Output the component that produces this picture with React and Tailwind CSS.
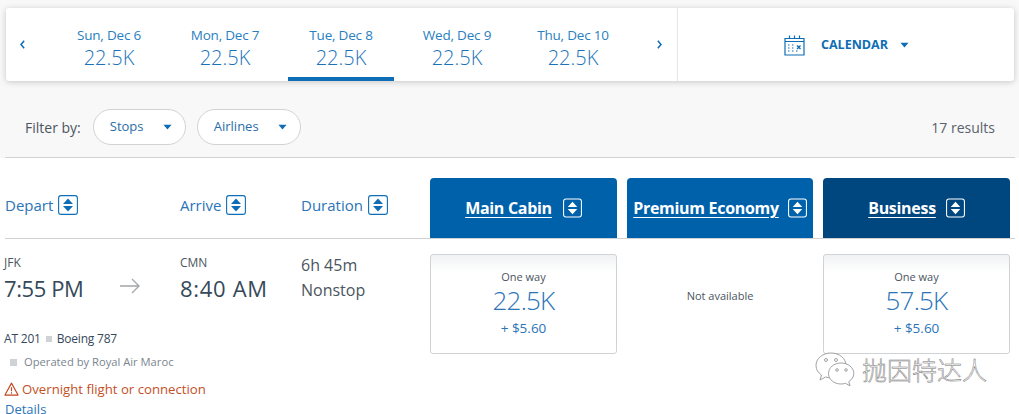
import React from 'react'

const dates = [
  { label: 'Sun, Dec 6', price: '22.5K' },
  { label: 'Mon, Dec 7', price: '22.5K' },
  { label: 'Tue, Dec 8', price: '22.5K', active: true },
  { label: 'Wed, Dec 9', price: '22.5K' },
  { label: 'Thu, Dec 10', price: '22.5K' },
]

const Caret = ({ className }) => (
  <svg viewBox="0 0 10 6" className={className} fill="currentColor">
    <path d="M0.5 0.5h9L5 5.8z" />
  </svg>
)

const Chevron = ({ left }) => (
  <svg viewBox="0 0 6 10" className="w-[5px] h-[9px] text-[#0e6db5]" fill="none" stroke="currentColor" strokeWidth="1.8">
    <path d={left ? 'M5 0.5L1.2 5 5 9.5' : 'M1 0.5L4.8 5 1 9.5'} />
  </svg>
)

const SortIcon = ({ light }) => (
  <svg viewBox="0 0 20 20" className={light ? 'w-[19px] h-[20px] text-white' : 'w-[20px] h-[20px] text-[#0e6db5]'}>
    <rect x="0.6" y="0.6" width="18.8" height="18.8" rx="2.5" fill="none" stroke="currentColor" strokeWidth="1.1" />
    <path d="M10 3.5L15 9H5z" fill="currentColor" />
    <path d="M10 16.5L15 11H5z" fill="currentColor" />
  </svg>
)

const CalendarIcon = () => (
  <svg viewBox="0 0 21 22" className="w-[21px] h-[22px] text-[#0e6db5]" fill="none" stroke="currentColor">
    <path d="M1 4.500h19v16.500H1zM1 7.500h19" strokeWidth="1.200" />
    <path d="M5.500 1.500v3M10.500 1.500v3M15.500 1.500v3" strokeWidth="1.200" />
    <path d="M4 11h1.500M8 11h1.500M4 14h1.500M8 14h1.500M4 17h1.500M8 17h1.500M12 17h1.500" strokeWidth="1.200" strokeDasharray="1.500 1" />
    <path d="M13 11.500l3.500 3.500M16.500 11.500L13 15" strokeWidth="1.400" />
  </svg>
)

const WarnIcon = () => (
  <svg viewBox="0 0 16 15" className="w-[15px] h-[14px] text-[#c4441c]" fill="none" stroke="currentColor" strokeWidth="1.200">
    <path d="M8 1.200L15 14H1z" strokeLinejoin="round" />
    <path d="M8 5.500v4.500M8 11v1.500" />
  </svg>
)

const Filter = ({ label, width }) => (
  <div className={`${width} h-[36px] rounded-full border border-[#d0d3d6] bg-white flex items-center justify-between pl-[16px] pr-[13px]`}>
    <span className="text-[13px] text-[#2a6ea8]">{label}</span>
    <Caret className="w-[9px] h-[6px] text-[#0e6db5]" />
  </div>
)

const ColHead = ({ label, width }) => (
  <div className={`${width} flex items-center gap-[5px]`}>
    <span className="text-[15px] text-[#2a74b8]">{label}</span>
    <SortIcon />
  </div>
)

const CabinHead = ({ label, dark, width, gap }) => (
  <div className={`${width} h-[60px] rounded-t-[4px] flex items-center justify-center ${gap} ${dark ? 'bg-[#00467f]' : 'bg-[#0061ab]'}`}>
    <span className="text-[16px] font-bold text-white underline underline-offset-[3px] tracking-[-0.3px]">{label}</span>
    <SortIcon light />
  </div>
)

const FareCard = ({ price }) => (
  <div className="w-[187px] h-[100px] rounded-[3px] border border-[#d0d3d6] bg-gradient-to-b from-[#f1f2f3] to-white to-[18%] flex flex-col items-center pt-[14px]">
    <span className="text-[11px] leading-[16px] text-[#4b5560]">One way</span>
    <span className="text-[26px] leading-[30px] text-[#2a74b8] tracking-[-0.8px] font-light">{price}</span>
    <span className="text-[13.5px] leading-[20px] mt-[3px] text-[#2a74b8]">+ $5.60</span>
  </div>
)

export default function App() {
  return (
    <div className="relative w-[1019px] h-[414px] overflow-hidden bg-white font-['Open_Sans','Noto_Sans',sans-serif]">
      {/* Date strip and filters */}
      <div className="h-[158px] bg-[#f8f8f8] pt-[8px]">
        <div className="ml-[6px] w-[1008px] h-[73px] bg-white rounded-[3px] shadow-[0_1px_6px_rgba(0,0,0,0.2)] flex">
          <div className="w-[671px] flex items-center">
            <div className="w-[50px] pl-[14px]"><Chevron left /></div>
            <div className="flex gap-[10px] h-full">
              {dates.map((d) => (
                <div key={d.label} className={`w-[106px] h-full flex flex-col items-center pt-[17px] ${d.active ? 'border-b-4 border-[#0e6db5]' : ''}`}>
                  <span className="text-[13.5px] leading-[20px] text-[#2a7fc0] tracking-[-0.2px]">{d.label}</span>
                  <span className="text-[20px] leading-[25px] text-[#1a72b8] font-light">{d.price}</span>
                </div>
              ))}
            </div>
            <div className="pl-[31px]"><Chevron /></div>
          </div>
          <div className="flex-1 border-l border-[#e4e6e8] flex items-center pl-[106px]">
            <CalendarIcon />
            <span className="ml-[16px] mt-[2px] text-[12.5px] font-bold text-[#0e6db5]">CALENDAR</span>
            <Caret className="ml-[12px] mt-[1px] w-[9px] h-[6px] text-[#0e6db5]" />
          </div>
        </div>
        <div className="ml-[5px] mt-[28px] w-[1010px] h-[49px] pb-[13px] border-b border-[#d0d3d6] flex items-start">
          <div className="flex items-center w-full pl-[20px] pr-[20px]">
            <span className="text-[14px] text-[#4b5560] mr-[12px]">Filter by:</span>
            <Filter label="Stops" width="w-[93px]" />
            <div className="w-[11px]" />
            <Filter label="Airlines" width="w-[104px]" />
            <span className="ml-auto text-[14px] text-[#5a626b]">17 results</span>
          </div>
        </div>
      </div>

      {/* Column headers */}
      <div className="ml-[5px] w-[1010px] h-[81px] pt-[20px] border-b border-[#d0d3d6] flex items-end">
        <div className="w-[425px] h-[60px] flex items-center pb-[6px]">
          <ColHead label="Depart" width="w-[175px]" />
          <ColHead label="Arrive" width="w-[121px]" />
          <ColHead label="Duration" width="w-[100px]" />
        </div>
        <div className="flex gap-[10px]">
          <CabinHead label="Main Cabin" width="w-[187px]" gap="gap-[11px]" />
          <CabinHead label="Premium Economy" width="w-[186px]" gap="gap-[9px]" />
          <CabinHead label="Business" width="w-[187px]" gap="gap-[10px]" dark />
        </div>
      </div>

      {/* Flight row */}
      <div className="ml-[5px] w-[1010px] flex pt-[15px]">
        <div className="w-[425px]">
          <div className="flex h-[77px]">
            <div className="w-[115px] flex flex-col">
              <span className="text-[12px] leading-[18px] text-[#4b5560] -ml-[1px]">JFK</span>
              <span className="text-[22px] leading-[32px] text-[#36495a] -ml-[1px] tracking-[-0.4px]">7:55 PM</span>
            </div>
            <div className="w-[60px] pt-[24px]">
              <svg viewBox="0 0 20 16" className="w-[20px] h-[16px] text-[#a3a6a9]" fill="none" stroke="currentColor" strokeWidth="1.300">
                <path d="M0 8h19M12 1l7 7-7 7" />
              </svg>
            </div>
            <div className="w-[121px] flex flex-col">
              <span className="text-[12px] leading-[18px] text-[#4b5560]">CMN</span>
              <span className="text-[22px] leading-[32px] text-[#36495a] tracking-[0.7px]">8:40 AM</span>
            </div>
            <div className="flex flex-col -mt-[1px]">
              <span className="text-[16px] leading-[25px] text-[#4b5560]">6h 45m</span>
              <span className="text-[16px] leading-[25px] text-[#4b5560]">Nonstop</span>
            </div>
          </div>
          <div className="flex items-center text-[12px] leading-[18px] text-[#36495a] -ml-[1px] tracking-[-0.2px] mt-[-1px]">
            <span>AT 201</span>
            <span className="w-[6px] h-[6px] bg-[#d0d3d6] mx-[5px]" />
            <span>Boeing 787</span>
          </div>
          <div className="flex items-center text-[11.2px] leading-[18px] text-[#7a858f] mt-[5px] pl-[5px]">
            <span className="w-[7px] h-[7px] bg-[#d0d3d6] mr-[7px]" />
            <span>Operated by Royal Air Maroc</span>
          </div>
          <div className="flex items-center gap-[3px] text-[13.2px] leading-[20px] text-[#c4501f] mt-[8px] -ml-[1px]">
            <WarnIcon />
            <span>Overnight flight or connection</span>
          </div>
          <div className="text-[13px] leading-[18px] text-[#2a74b8] mt-[1px]">Details</div>
        </div>
        <div className="flex gap-[10px] items-start">
          <FareCard price="22.5K" />
          <div className="w-[186px] h-[100px] flex items-center justify-center">
            <span className="text-[11px] text-[#4b5560] mt-[-16px]">Not available</span>
          </div>
          <FareCard price="57.5K" />
        </div>
      </div>

      {/* WeChat watermark over the page */}
      <div className="absolute left-[815px] top-[352px] flex items-center gap-[7px]">
        <svg viewBox="0 0 40 34" className="w-[40px] h-[34px] text-[#8a8a8a]" fill="white" stroke="currentColor" strokeWidth="0.800">
          <path d="M16 1C7.500 1 1 6.500 1 13.500c0 4 2.200 7.300 5.500 9.500L5 28l5.500-3c1.800.500 3.500.800 5.500.800 C24 25.800 31 20 31 13.500 31 6.500 24.500 1 16 1z" />
          <path d="M26 11c-7 0-12.500 4.500-12.500 10.500S19 32 26 32c1.600 0 3-.200 4.400-.700l4.600 2.500-1.200-4.200c3-2 5-4.800 5-8.100C38.800 15.500 33 11 26 11z" />
          <circle cx="11" cy="8" r="1.500" fill="none" />
          <circle cx="21" cy="8" r="1.500" fill="none" />
          <circle cx="22" cy="18" r="1.300" fill="none" />
          <circle cx="31" cy="18" r="1.300" fill="none" />
        </svg>
        <span className="text-[25px] leading-[34px] font-['Noto_Sans_CJK_SC',sans-serif] font-light text-white [-webkit-text-stroke:0.5px_#777]">抛因特达人</span>
      </div>
    </div>
  )
}
